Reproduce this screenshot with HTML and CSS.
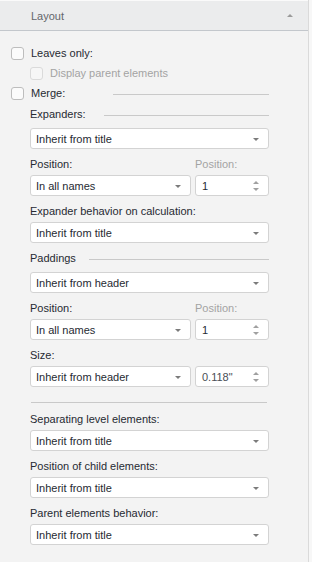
FILE: index.html
```html
<!DOCTYPE html>
<html>
<head>
<meta charset="utf-8">
<link rel="stylesheet" href="styles.css">
</head>
<body>
<div class="panel">
  <div class="panel-header">
    <span class="panel-title">Layout</span>
    <span class="collapse-arrow"></span>
  </div>
  <div class="panel-body">
    <label class="check-row"><span class="checkbox"></span><span class="check-text">Leaves only:</span></label>
    <label class="check-row sub disabled"><span class="checkbox"></span><span class="check-text">Display parent elements</span></label>
    <div class="check-row merge-row">
      <span class="checkbox"></span><span class="check-text">Merge:</span><span class="rule rule-merge"></span>
    </div>

    <div class="fields">
      <div class="heading heading-first"><span>Expanders:</span><span class="rule rule-expanders"></span></div>
      <div class="select"><span class="select-text">Inherit from title</span><span class="caret"></span></div>

      <div class="pair">
        <div class="group grow">
          <div class="label">Position:</div>
          <div class="select"><span class="select-text">In all names</span><span class="caret"></span></div>
        </div>
        <div class="group narrow">
          <div class="label muted">Position:</div>
          <div class="spin"><span class="spin-text">1</span><span class="spin-arrows"><span class="up"></span><span class="down"></span></span></div>
        </div>
      </div>

      <div class="group">
        <div class="label">Expander behavior on calculation:</div>
        <div class="select"><span class="select-text">Inherit from title</span><span class="caret"></span></div>
      </div>

      <div class="heading"><span>Paddings</span><span class="rule rule-paddings"></span></div>
      <div class="select"><span class="select-text">Inherit from header</span><span class="caret"></span></div>

      <div class="pair">
        <div class="group grow">
          <div class="label">Position:</div>
          <div class="select"><span class="select-text">In all names</span><span class="caret"></span></div>
        </div>
        <div class="group narrow">
          <div class="label muted">Position:</div>
          <div class="spin"><span class="spin-text">1</span><span class="spin-arrows"><span class="up"></span><span class="down"></span></span></div>
        </div>
      </div>

      <div class="pair">
        <div class="group grow">
          <div class="label">Size:</div>
          <div class="select"><span class="select-text">Inherit from header</span><span class="caret"></span></div>
        </div>
        <div class="group narrow">
          <div class="label blank"></div>
          <div class="spin"><span class="spin-text size-value">0.118"</span><span class="spin-arrows"><span class="up"></span><span class="down"></span></span></div>
        </div>
      </div>

      <div class="separator"></div>

      <div class="group">
        <div class="label">Separating level elements:</div>
        <div class="select"><span class="select-text">Inherit from title</span><span class="caret"></span></div>
      </div>
      <div class="group">
        <div class="label">Position of child elements:</div>
        <div class="select"><span class="select-text">Inherit from title</span><span class="caret"></span></div>
      </div>
      <div class="group">
        <div class="label">Parent elements behavior:</div>
        <div class="select"><span class="select-text">Inherit from title</span><span class="caret"></span></div>
      </div>
    </div>
  </div>
</div>
</body>
</html>
```
FILE: styles.css
```css
html, body {
  margin: 0;
  padding: 0;
  background: #f7f7f7;
}
body {
  font-family: "Liberation Sans", Arial, sans-serif;
  font-size: 11px;
  color: #262a32;
}
.panel {
  width: 309px;
  height: 562px;
  background: #f3f3f3;
  border-right: 1px solid #dadada;
  box-sizing: border-box;
}
.panel-header {
  height: 31px;
  box-sizing: border-box;
  background: #ebeced;
  border-top: 1px solid #fafafa;
  border-bottom: 1px solid #c3c7cc;
  display: flex;
  align-items: center;
  padding: 0 15px 0 31px;
}
.panel-title {
  flex: 1;
  color: #63666b;
  line-height: 16px;
}
.collapse-arrow {
  width: 0;
  height: 0;
  border-left: 3px solid transparent;
  border-right: 3px solid transparent;
  border-bottom: 3px solid #9a9a9a;
}
.panel-body {
  padding: 12px 0 0 11px;
}
.check-row {
  display: flex;
  align-items: center;
  height: 20px;
}
.check-row.sub {
  padding-left: 19px;
}
.merge-row {
  width: 258px;
}
.checkbox {
  width: 11px;
  height: 11px;
  border: 1px solid #bdbdbd;
  border-radius: 3px;
  background: #fbfbfb;
  flex: none;
}
.check-text {
  margin-left: 7px;
  line-height: 16px;
}
.disabled .checkbox {
  border-color: #dadada;
  background: #f6f6f6;
}
.disabled .check-text {
  color: #a3a3a3;
}
.rule {
  height: 1px;
  background: #c9c9c9;
  flex: 1;
  margin-top: 2px;
}
.rule-merge { margin-left: 48px; }
.rule-expanders { margin-left: 18px; }
.rule-paddings { margin-left: 13px; }
.fields {
  width: 239px;
  padding-left: 19px;
}
.heading {
  display: flex;
  align-items: center;
  height: 16px;
  line-height: 16px;
  margin: 7px 0 6px;
}
.heading-first {
  margin-top: 3px;
}
.group {
  margin-top: 7px;
}
.label {
  height: 16px;
  line-height: 16px;
  margin-bottom: 3px;
  white-space: nowrap;
}
.label.muted {
  color: #a3a3a3;
}
.pair {
  display: flex;
  gap: 4px;
}
.grow {
  flex: 1;
}
.narrow {
  width: 74px;
  flex: none;
}
.select, .spin {
  height: 21px;
  box-sizing: border-box;
  background: #fff;
  border: 1px solid #d3d3d3;
  border-radius: 3px;
  display: flex;
  align-items: center;
  padding: 0 9px 0 5px;
}
.select-text, .spin-text {
  flex: 1;
  line-height: 16px;
  white-space: nowrap;
}
.caret {
  width: 0;
  height: 0;
  border-left: 3px solid transparent;
  border-right: 3px solid transparent;
  border-top: 3px solid #7b7b7b;
  margin-top: 1px;
}
.spin {
  padding-left: 6px;
}
.size-value {
  color: #4a4e56;
}
.spin-arrows {
  display: flex;
  flex-direction: column;
  gap: 4px;
}
.spin-arrows .up {
  width: 0;
  height: 0;
  border-left: 3px solid transparent;
  border-right: 3px solid transparent;
  border-bottom: 3px solid #a0a0a0;
}
.spin-arrows .down {
  width: 0;
  height: 0;
  border-left: 3px solid transparent;
  border-right: 3px solid transparent;
  border-top: 3px solid #a0a0a0;
}
.separator {
  height: 1px;
  background: #c9c9c9;
  margin: 15px 2px 0 1px;
}
.separator + .group {
  margin-top: 8px;
}
```
